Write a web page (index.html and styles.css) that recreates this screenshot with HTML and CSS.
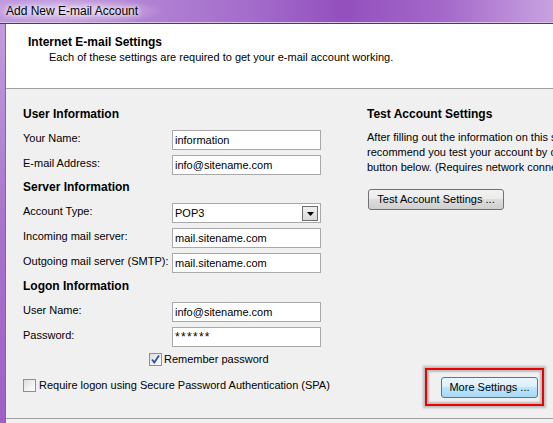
FILE: index.html
```html
<!DOCTYPE html>
<html>
<head>
<meta charset="utf-8">
<link rel="stylesheet" href="styles.css">
</head>
<body>
<div class="window">
  <div class="titlebar"><span class="title">Add New E-mail Account</span></div>
  <div class="frame">
    <div class="frame-edge"></div>
    <div class="client">
      <div class="header">
        <div class="h-title">Internet E-mail Settings</div>
        <div class="h-sub">Each of these settings are required to get your e-mail account working.</div>
      </div>
      <div class="content">
        <div class="left">
          <div class="section first">User Information</div>
          <div class="form">
            <div class="label">Your Name:</div><div class="field">information</div>
            <div class="label">E-mail Address:</div><div class="field">info@sitename.com</div>
          </div>
          <div class="section">Server Information</div>
          <div class="form">
            <div class="label">Account Type:</div>
            <div class="field select"><span>POP3</span><span class="drop"><svg width="7" height="4" viewBox="0 0 7 4"><path d="M0 0h7L3.5 4z" fill="#000"/></svg></span></div>
            <div class="label">Incoming mail server:</div><div class="field">mail.sitename.com</div>
            <div class="label">Outgoing mail server (SMTP):</div><div class="field">mail.sitename.com</div>
          </div>
          <div class="section logon">Logon Information</div>
          <div class="form">
            <div class="label">User Name:</div><div class="field">info@sitename.com</div>
            <div class="label">Password:</div><div class="field pw">******</div>
          </div>
          <div class="check remember">
            <span class="box"><svg width="11" height="11" viewBox="0 0 11 11"><path d="M2 5.5l2.3 3L9 1.5" fill="none" stroke="#2a4f9e" stroke-width="1.8"/></svg></span>
            <span>Remember password</span>
          </div>
          <div class="check spa">
            <span class="box"></span>
            <span>Require logon using Secure Password Authentication (SPA)</span>
          </div>
        </div>
        <div class="right">
          <div class="section first">Test Account Settings</div>
          <div class="para">After filling out the information on this screen, we<br>recommend you test your account by clicking the<br>button below. (Requires network connection)</div>
          <div class="btn test">Test Account Settings ...</div>
          <div class="annot"><div class="btn more">More Settings ...</div></div>
        </div>
      </div>
      <div class="footer"></div>
    </div>
  </div>
</div>
</body>
</html>
```
FILE: styles.css
```css
html, body {
  margin: 0;
  padding: 0;
}
body {
  width: 553px;
  height: 423px;
  overflow: hidden;
  font-family: "Liberation Sans", Arial, sans-serif;
  font-size: 11px;
  color: #000;
  background: #f0f0f0;
}
.window {
  display: flex;
  flex-direction: column;
  height: 423px;
}
.titlebar {
  flex: none;
  height: 23px;
  box-sizing: border-box;
  display: flex;
  align-items: center;
  padding-left: 6px;
  background:
    radial-gradient(ellipse 90px 14px at 75px 11px, rgba(236, 222, 246, 0.75), rgba(236, 222, 246, 0) 100%),
    linear-gradient(90deg, #c09ade 0%, #b284d4 25%, #a46ccb 45%, #9350be 62%, #a468c9 80%, #c8a2e0 100%);
  border-bottom: 1px solid #d7c4e6;
  box-shadow: 0 1px 0 #4d3a60;
}
.title {
  font-size: 12px;
  color: #000;
  text-shadow: 0 0 4px #fff, 0 0 6px #fff;
}
.frame {
  flex: 1;
  display: flex;
  min-height: 0;
  margin-top: 1px;
}
.frame-edge {
  flex: none;
  width: 5px;
  background: linear-gradient(180deg, #c29ddd 0%, #a873cc 50%, #9e60c6 100%);
}
.client {
  flex: 1;
  display: flex;
  flex-direction: column;
  border-left: 1px solid #7c6c8a;
  background: #f0f0f0;
}
.header {
  flex: none;
  height: 65px;
  box-sizing: border-box;
  background: #fff;
  border-bottom: 1px solid #a0a0a0;
  padding: 11px 0 0 22px;
  line-height: 15px;
}
.h-title {
  font-weight: bold;
  font-size: 12px;
}
.h-sub {
  padding-left: 21px;
}
.content {
  flex: 1;
  display: flex;
  padding-left: 17px;
  line-height: 15px;
}
.left {
  width: 298px;
  flex: none;
  padding-top: 18px;
}
.right {
  width: 171px;
  flex: none;
  margin-left: 46px;
  padding-top: 18px;
  display: flex;
  flex-direction: column;
}
.section {
  font-weight: bold;
  font-size: 12px;
  margin: 5px 0 8px;
}
.section.first {
  margin-top: 0;
}
.section.logon {
  margin-top: 6px;
}
.form {
  display: grid;
  grid-template-columns: 149px 149px;
  grid-auto-rows: 20px;
  row-gap: 5px;
}
.label {
  white-space: nowrap;
  padding-top: 1px;
}
.field {
  box-sizing: border-box;
  height: 20px;
  border: 1px solid #a9a9a9;
  background: #fff;
  padding: 1px 2px 0;
  line-height: 17px;
  white-space: nowrap;
}
.field.select {
  display: flex;
  justify-content: space-between;
  align-items: center;
  padding-right: 2px;
}
.drop {
  box-sizing: border-box;
  width: 16px;
  height: 15px;
  border: 1px solid #6f6f6f;
  background: linear-gradient(180deg, #efefef 0%, #dadada 100%);
  display: flex;
  align-items: center;
  justify-content: center;
}
.field.pw {
  font-size: 12px;
  letter-spacing: 1.3px;
}
.check {
  display: flex;
  align-items: center;
  gap: 2px;
  white-space: nowrap;
}
.check.spa {
  gap: 3px;
}
.check.remember {
  margin: 5px 0 0 126px;
}
.check.spa {
  margin-top: 11px;
}
.box {
  box-sizing: border-box;
  width: 13px;
  height: 13px;
  border: 1px solid #8e8f8f;
  background: linear-gradient(135deg, #dcdcdc 0%, #f3f3f3 60%, #fbfbfb 100%);
  display: flex;
  align-items: center;
  justify-content: center;
  flex: none;
}
.para {
  white-space: nowrap;
}
.btn {
  box-sizing: border-box;
  height: 21px;
  line-height: 19px;
  text-align: center;
  border-radius: 3px;
  white-space: nowrap;
}
.btn.test {
  margin-top: 14px;
  margin-left: 1px;
  width: 136px;
  border: 1px solid #707070;
  background: linear-gradient(180deg, #f2f2f2 0%, #ebebeb 50%, #dddddd 50%, #cfcfcf 100%);
}
.annot {
  position: relative;
  margin-top: auto;
  margin-bottom: 20px;
  align-self: flex-end;
}
.annot::after {
  content: "";
  position: absolute;
  left: -16px;
  right: -6px;
  top: -9px;
  bottom: -8px;
  border: 2px solid #ee0000;
  box-shadow: 0 0 2px 2px rgba(0, 0, 0, 0.22), inset 0 0 2px 2px rgba(0, 0, 0, 0.22);
}
.btn.more {
  width: 97px;
  border: 1px solid #3c7fb1;
  background: linear-gradient(180deg, #eaf6fd 0%, #d9f0fc 50%, #bee6fd 50%, #a7d9f5 100%);
}
.footer {
  flex: none;
  height: 5px;
  border-top: 1px solid #a0a0a0;
  box-sizing: border-box;
  background: #f0f0f0;
}
```
